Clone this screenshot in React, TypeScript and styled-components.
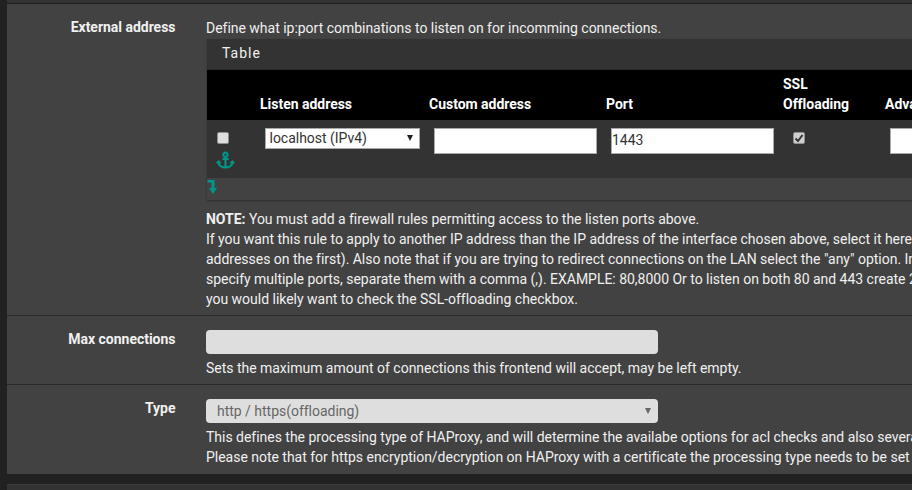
import React from 'react';
import styled, { createGlobalStyle } from 'styled-components';
import { FaAnchor } from 'react-icons/fa';

const GlobalStyle = createGlobalStyle`
  html, body {
    margin: 0;
    height: 100%;
    overflow: hidden;
    background: #212121;
  }
  body {
    font-family: Roboto, "Liberation Sans", sans-serif;
    font-size: 14px;
    line-height: 20px;
    letter-spacing: -0.02px;
    color: #f0f0f0;
  }
`;

const Page = styled.div`
  width: 912px;
  height: 490px;
  overflow: hidden;
  padding-left: 7px;
  box-sizing: border-box;
`;

const TopEdge = styled.div`
  height: 3px;
  background: #333;
  border-bottom: 1px solid #1f1f1f;
`;

const Panel = styled.div`
  background: #424242;
  width: 905px;
`;

const Row = styled.div<{ $height: number; $last?: boolean }>`
  display: grid;
  grid-template-columns: 168.5px 1fr;
  column-gap: 30.5px;
  height: ${(p) => p.$height}px;
  box-sizing: border-box;
  border-bottom: ${(p) => (p.$last ? 'none' : '1px solid #2a2a2a')};
  overflow: hidden;
`;

const Label = styled.div<{ $top: number }>`
  padding-top: ${(p) => p.$top}px;
  text-align: right;
  font-weight: 700;
  font-size: 14px;
`;

const Field = styled.div<{ $top: number }>`
  padding-top: ${(p) => p.$top}px;
  min-width: 0;
`;

const Line = styled.div`
  white-space: nowrap;
`;

const TableBox = styled.div`
  margin: 1px 0 9px 1px;
  width: 800px;
  background: #424242;
  box-shadow: 0 1px 2px rgba(0, 0, 0, 0.3);
`;

const TableTitle = styled.div`
  height: 31px;
  line-height: 28px;
  padding-left: 15px;
  background: #333;
  letter-spacing: 1px;
  border-bottom: 1px solid #2a2a2a;
  box-sizing: border-box;
`;

const Columns = styled.div`
  display: grid;
  grid-template-columns: 53px 169px 177px 177px 102px 60px;
`;

const HeadRow = styled(Columns)`
  height: 50px;
  background: #000;
  align-items: end;
  font-weight: 700;
  font-size: 14px;
  color: #fff;
`;

const HeadCell = styled.div`
  padding-bottom: 6px;
  white-space: nowrap;
`;

const BodyRow = styled(Columns)`
  height: 58px;
  background: #333;
`;

const InputCell = styled.div`
  padding: 8px 0 0 5px;
`;

const Check = styled.span<{ $on?: boolean }>`
  display: flex;
  align-items: center;
  justify-content: center;
  width: 12px;
  height: 12px;
  margin: 4px 0 0 5px;
  background: ${(p) => (p.$on ? '#cfcfcf' : '#dedede')};
  border: 1px solid #8f8f8f;
  border-radius: 2px;
  box-sizing: border-box;
`;

const TextBox = styled.div<{ $width: number }>`
  width: ${(p) => p.$width}px;
  height: 26px;
  background: #fff;
  border: 1px solid #a9a9a9;
  box-sizing: border-box;
  color: #333;
  line-height: 22px;
  overflow: hidden;
`;

const PlainSelect = styled.div`
  width: 155px;
  height: 21px;
  background: #fff;
  border: 1px solid #a9a9a9;
  box-sizing: border-box;
  color: #333;
  padding: 0 0 1px 3.5px;
  line-height: 17px;
  display: flex;
  justify-content: space-between;
  align-items: center;
`;

const Caret = styled.span<{ $color: string; $right: number; $lift: number }>`
  width: 0;
  height: 0;
  border-left: 3px solid transparent;
  border-right: 3px solid transparent;
  border-top: 6px solid ${(p) => p.$color};
  margin: 0 ${(p) => p.$right}px ${(p) => p.$lift}px 0;
`;

const AnchorIcon = styled(FaAnchor)`
  display: block;
  width: 19px;
  height: 18px;
  margin: 7px 0 0 4px;
  color: #009688;
`;

const TableFoot = styled.div`
  height: 22px;
  padding-top: 2px;
  box-sizing: border-box;
  background: #424242;
  line-height: 0;
`;

const Disabled = styled.div`
  width: 452px;
  height: 24px;
  background: #dedede;
  border-radius: 4px;
  margin-bottom: 4px;
`;

const DisabledSelect = styled(Disabled)`
  display: flex;
  align-items: center;
  justify-content: space-between;
  color: #666;
  padding-left: 11px;
  box-sizing: border-box;
`;

const Gap = styled.div`
  height: 10px;
`;

const NextPanel = styled.div`
  height: 6px;
  background: #333;
  border-top: 1px solid #3c3c3c;
`;

const CheckMark = () => (
  <svg width="10" height="10" viewBox="0 0 10 10" fill="none" stroke="#333" strokeWidth="2">
    <path d="M1.5 5.5l2.5 2.5 4.5-6" />
  </svg>
);

const LevelDown = () => (
  <svg width="10" height="14" viewBox="0 0 10 14" fill="#009688">
    <path d="M0.5 0H7.5V8H10L6 14 2 8H4.5V2.5H0.5Z" />
  </svg>
);

export default function App() {
  return (
    <Page>
      <GlobalStyle />
      <TopEdge />
      <Panel>
        <Row $height={312}>
          <Label $top={13}>External address</Label>
          <Field $top={14}>
            <Line>Define what ip:port combinations to listen on for incomming connections.</Line>
            <TableBox>
              <TableTitle>Table</TableTitle>
              <HeadRow>
                <div />
                <HeadCell>Listen address</HeadCell>
                <HeadCell>Custom address</HeadCell>
                <HeadCell>Port</HeadCell>
                <HeadCell>
                  SSL
                  <br />
                  Offloading
                </HeadCell>
                <HeadCell>Advanced</HeadCell>
              </HeadRow>
              <BodyRow>
                <InputCell>
                  <Check />
                  <AnchorIcon />
                </InputCell>
                <InputCell>
                  <PlainSelect>
                    localhost (IPv4)
                    <Caret $color="#222" $right={6} $lift={1} />
                  </PlainSelect>
                </InputCell>
                <InputCell>
                  <TextBox $width={163} />
                </InputCell>
                <InputCell>
                  <TextBox $width={163}>1443</TextBox>
                </InputCell>
                <InputCell>
                  <Check $on>
                    <CheckMark />
                  </Check>
                </InputCell>
                <InputCell>
                  <TextBox $width={60} />
                </InputCell>
              </BodyRow>
              <TableFoot>
                <LevelDown />
              </TableFoot>
            </TableBox>
            <Line>
              <b>NOTE:</b> You must add a firewall rules permitting access to the listen ports above.
            </Line>
            <Line>If you want this rule to apply to another IP address than the IP address of the interface chosen above, select it here</Line>
            <Line>addresses on the first). Also note that if you are trying to redirect connections on the LAN select the "any" option. In</Line>
            <Line>specify multiple ports, separate them with a comma (,). EXAMPLE: 80,8000 Or to listen on both 80 and 443 create 2</Line>
            <Line>you would likely want to check the SSL-offloading checkbox.</Line>
          </Field>
        </Row>
        <Row $height={69}>
          <Label $top={13}>Max connections</Label>
          <Field $top={14}>
            <Disabled />
            <Line>Sets the maximum amount of connections this frontend will accept, may be left empty.</Line>
          </Field>
        </Row>
        <Row $height={89} $last>
          <Label $top={13}>Type</Label>
          <Field $top={14}>
            <DisabledSelect>
              http / https(offloading)
              <Caret $color="#666" $right={7} $lift={1} />
            </DisabledSelect>
            <Line>This defines the processing type of HAProxy, and will determine the availabe options for acl checks and also several</Line>
            <Line>Please note that for https encryption/decryption on HAProxy with a certificate the processing type needs to be set to</Line>
          </Field>
        </Row>
      </Panel>
      <Gap />
      <NextPanel />
    </Page>
  );
}
